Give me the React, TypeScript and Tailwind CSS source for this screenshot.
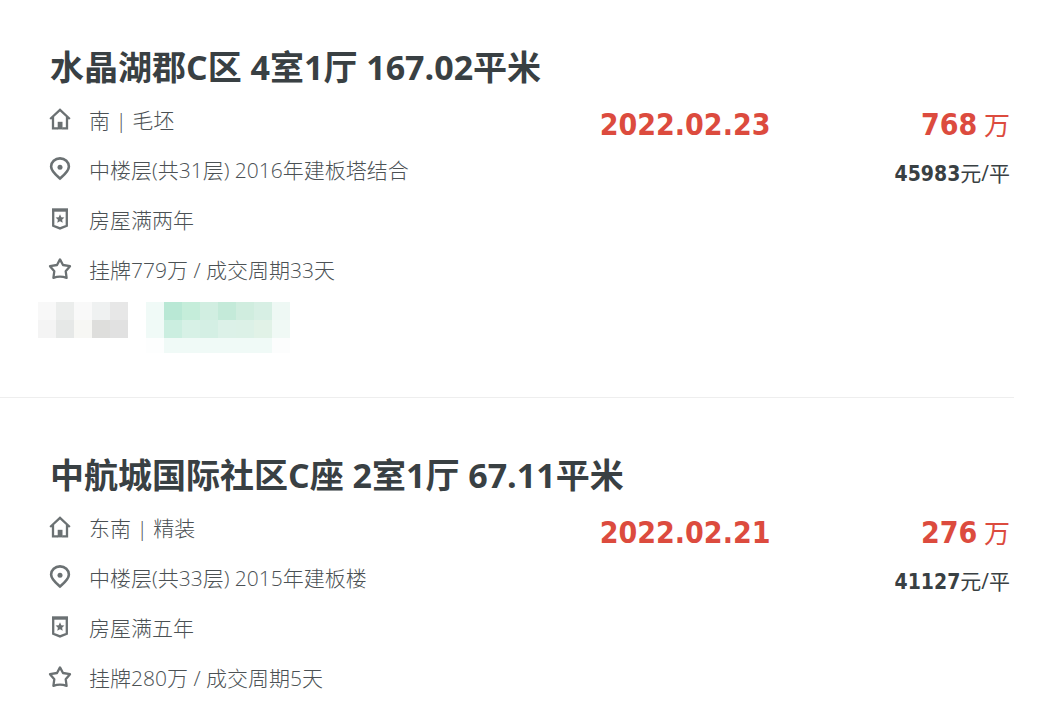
import type { ReactNode } from 'react';

interface Deal {
  title: string;
  orient: string;
  floor: string;
  owned: string;
  cycle: string;
  date: string;
  total: string;
  unit: string;
  masked?: boolean;
}

const deals: Deal[] = [
  {
    title: '水晶湖郡C区 4室1厅 167.02平米',
    orient: '南 | 毛坯',
    floor: '中楼层(共31层) 2016年建板塔结合',
    owned: '房屋满两年',
    cycle: '挂牌779万 / 成交周期33天',
    date: '2022.02.23',
    total: '768',
    unit: '45983',
    masked: true,
  },
  {
    title: '中航城国际社区C座 2室1厅 67.11平米',
    orient: '东南 | 精装',
    floor: '中楼层(共33层) 2015年建板楼',
    owned: '房屋满五年',
    cycle: '挂牌280万 / 成交周期5天',
    date: '2022.02.21',
    total: '276',
    unit: '41127',
  },
];

const Icon = ({ children }: { children: ReactNode }) => (
  <svg
    className="mb-0.5 h-6 w-6 shrink-0 text-[#6b7173]"
    viewBox="0 0 24 24"
    fill="none"
    stroke="currentColor"
    strokeWidth="2.3"
    aria-hidden="true"
  >
    {children}
  </svg>
);

const HouseIcon = () => (
  <Icon>
    <path d="M2.2 12 12 2.8 21.8 12M5 10V21.4H10M19 10V21.4H14.2" />
    <path d="M9.7 22.4V14.8h4.8V22.4Z" fill="currentColor" stroke="none" />
  </Icon>
);

const PinIcon = () => (
  <Icon>
    <path d="M12 21.6C8.2 18.3 3.1 14.3 3.1 9.6A8.9 8.2 0 0 1 20.9 9.6C20.9 14.3 15.8 18.3 12 21.6Z" strokeWidth="2.6" />
    <circle cx="12" cy="10.2" r="2.5" fill="currentColor" stroke="none" />
  </Icon>
);

const BadgeIcon = () => (
  <Icon>
    <path d="M5.2 3H18.8V18.8L12 21.4 5.2 18.8Z" />
    <path d="M4 3H20" strokeWidth="3.2" />
    <path d="m12 7.3 1.3 2.9 3.1.4-2.3 2.1.6 3.1-2.7-1.5-2.7 1.5.6-3.1-2.3-2.1 3.1-.4Z" fill="currentColor" stroke="none" />
  </Icon>
);

const StarIcon = () => (
  <Icon>
    <path d="M12 2.4 15 8 22 9.2 17.7 14.2 18.6 20.8Q12 18.4 5.4 20.8L6.3 14.2 2 9.2 9 8Z" strokeLinejoin="round" />
  </Icon>
);

const greyCells = [
  ['#f8f8f8', '#ebedec', '#f9f9f9', '#eff1f1', '#e7e7e7'],
  ['#f4f4f4', '#e6e8e7', '#f7f7f4', '#dededc', '#e1e1e1'],
];

const greenCells = [
  ['#f0faf7', '#b9e8d5', '#c5edda', '#d1eee1', '#c4ead9', '#d0eddf', '#d7efe4', '#eef8f4'],
  ['#f0faf7', '#cbeee0', '#d7f1e6', '#d4efe4', '#dcf1e8', '#dcf1e7', '#e1f2e7', '#f0f9f5'],
  ['#fdfefe', '#f0faf7', '#f0faf7', '#f0faf7', '#f0faf7', '#f0faf7', '#f0faf7', '#fcfdfd'],
];

const Mosaic = ({ cells, height }: { cells: string[][]; height: number }) => (
  <svg width={cells[0].length * 18} height={height} shapeRendering="crispEdges" aria-hidden="true">
    {cells.map((row, y) =>
      row.map((fill, x) => (
        <rect key={`${x}-${y}`} x={x * 18} y={y * 18} width="18" height="18" fill={fill} />
      ))
    )}
  </svg>
);

const InfoRow = ({ icon, children }: { icon: ReactNode; children: ReactNode }) => (
  <li className="flex h-[50px] items-center gap-[17px]">
    {icon}
    <span className="whitespace-nowrap">{children}</span>
  </li>
);

const DealItem = ({ deal }: { deal: Deal }) => (
  <li className="border-b border-[#eeeeee] pt-[53px] pr-1 pb-11 pl-12 first:pt-[43px]">
    <h2 className="mb-1 pl-0.5 text-[34px] leading-12 font-bold whitespace-nowrap">{deal.title}</h2>
    <div className="grid grid-cols-[4fr_3fr]">
      <ul className="text-[21px] leading-8 font-light text-[#4b5154]">
        <InfoRow icon={<HouseIcon />}>{deal.orient}</InfoRow>
        <InfoRow icon={<PinIcon />}>{deal.floor}</InfoRow>
        <InfoRow icon={<BadgeIcon />}>{deal.owned}</InfoRow>
        <InfoRow icon={<StarIcon />}>{deal.cycle}</InfoRow>
      </ul>
      <div className="flex items-start justify-between pt-2 pl-0.5">
        <time className="font-['DejaVu_Sans_Condensed','DejaVu_Sans',sans-serif] text-[30px] leading-11 font-bold text-[#dc4b3e]">
          {deal.date}
        </time>
        <div className="text-right">
          <p className="text-[26px] leading-11 text-[#dc4b3e]">
            <strong className="font-['DejaVu_Sans_Condensed','DejaVu_Sans',sans-serif] text-[30px] font-bold">
              {deal.total}
            </strong>{' '}
            万
          </p>
          <p className="mt-1 text-[21px] leading-11">
            <strong className="font-['DejaVu_Sans_Condensed','DejaVu_Sans',sans-serif] font-bold">{deal.unit}</strong>
            元/平
          </p>
        </div>
      </div>
    </div>
    {deal.masked && (
      <div className="-ml-[10px] flex items-start gap-[18px] pt-[7px]">
        <Mosaic cells={greyCells} height={36} />
        <Mosaic cells={greenCells} height={51} />
      </div>
    )}
  </li>
);

const App = () => (
  <main className="min-h-screen overflow-hidden bg-white pr-[34px] font-['Open_Sans','Noto_Sans_CJK_SC',sans-serif] text-[#394043]">
    <ul>
      {deals.map((deal) => (
        <DealItem key={deal.title} deal={deal} />
      ))}
    </ul>
  </main>
);

export default App;
